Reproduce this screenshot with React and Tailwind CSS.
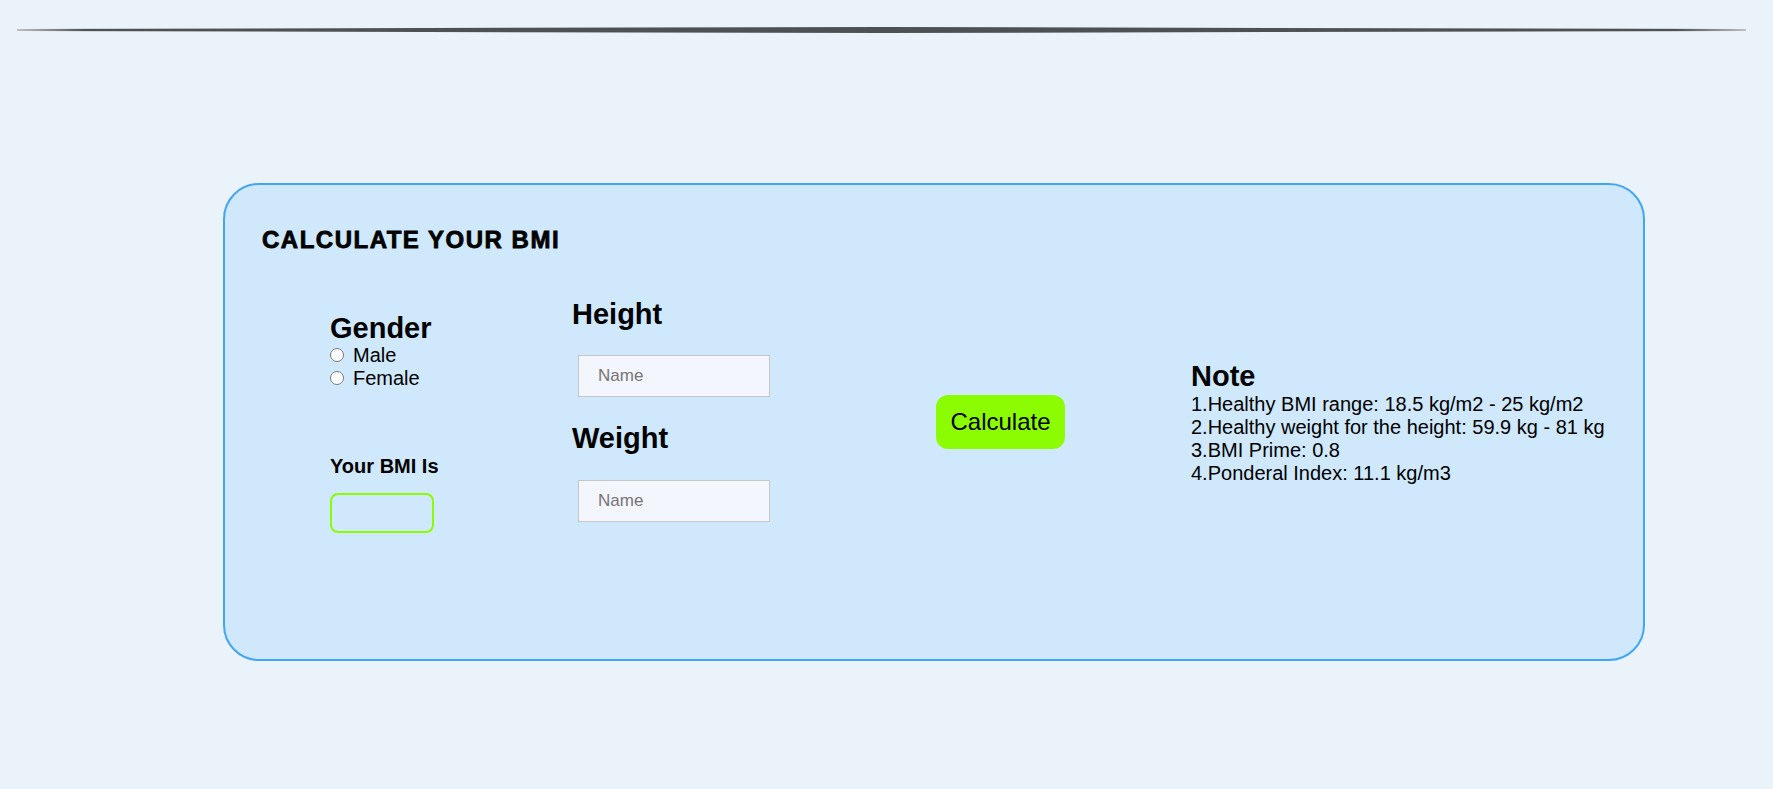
import React from 'react';

const notes = [
    '1.Healthy BMI range: 18.5 kg/m2 - 25 kg/m2',
    '2.Healthy weight for the height: 59.9 kg - 81 kg',
    '3.BMI Prime: 0.8',
    '4.Ponderal Index: 11.1 kg/m3',
];

const App = () => {
    return (
        <div className="min-h-screen bg-[#eaf2fa] font-['Liberation_Sans',Arial,sans-serif] text-black">
            {/* top divider */}
            <div className="pt-[27px] pl-[17px] pr-[27px]">
                <div className="h-[6px] [clip-path:polygon(0_33%,50%_0,100%_33%,100%_67%,50%_100%,0_67%)] bg-[linear-gradient(to_right,#bcc0c4,#4c5154_4%,#4c5154_96%,#bcc0c4)]" />
            </div>

            <div className="pl-[223px] pt-[150px]">
                <div className="w-[1422px] h-[478px] rounded-[36px] border-2 border-[#42a5f5] bg-[#cfe8fb] pt-[41px] pl-[37px]">
                    <h1 className="text-[24px] leading-[28px] font-bold tracking-[1.5px] [-webkit-text-stroke:0.8px_black]">
                        CALCULATE YOUR BMI
                    </h1>

                    <div className="flex items-center h-[336px] pl-[68px]">
                        {/* Gender + result */}
                        <div className="w-[242px] flex flex-col">
                            <h2 className="text-[29px] leading-[32px] font-bold">Gender</h2>
                            <label className="flex items-center text-[20px] leading-[23px]">
                                <input type="radio" name="gender" className="m-0 mr-[9px] w-[14px] h-[14px]" />
                                Male
                            </label>
                            <label className="flex items-center text-[20px] leading-[23px]">
                                <input type="radio" name="gender" className="m-0 mr-[9px] w-[14px] h-[14px]" />
                                Female
                            </label>
                            <div className="mt-[65px] text-[20px] leading-[23px] font-bold">Your BMI Is</div>
                            <div className="mt-[15px] w-[104px] h-[40px] rounded-[8px] border-2 border-[#8cfc03]" />
                        </div>

                        {/* Height / Weight */}
                        <div className="w-[364px] flex flex-col pb-[24px]">
                            <h2 className="text-[29px] leading-[33px] font-bold">Height</h2>
                            <input
                                type="text"
                                placeholder="Name"
                                className="mt-[24px] ml-[6px] w-[192px] h-[42px] border border-[#c6c6c6] bg-[#f4f6fd] pl-[19px] text-[17px] placeholder:text-[#757575] outline-none"
                            />
                            <h2 className="mt-[25px] text-[29px] leading-[33px] font-bold">Weight</h2>
                            <input
                                type="text"
                                placeholder="Name"
                                className="mt-[25px] ml-[6px] w-[192px] h-[42px] border border-[#c6c6c6] bg-[#f4f6fd] pl-[19px] text-[17px] placeholder:text-[#757575] outline-none"
                            />
                        </div>

                        <button className="w-[129px] h-[54px] rounded-[12px] bg-[#8cfc03] text-[24px] text-black">
                            Calculate
                        </button>

                        {/* Note */}
                        <div className="ml-[126px] flex flex-col">
                            <h2 className="text-[29px] leading-[33px] font-bold">Note</h2>
                            {notes.map((n) => (
                                <div key={n} className="text-[20px] leading-[23px]">{n}</div>
                            ))}
                        </div>
                    </div>
                </div>
            </div>
        </div>
    );
};

export default App;
